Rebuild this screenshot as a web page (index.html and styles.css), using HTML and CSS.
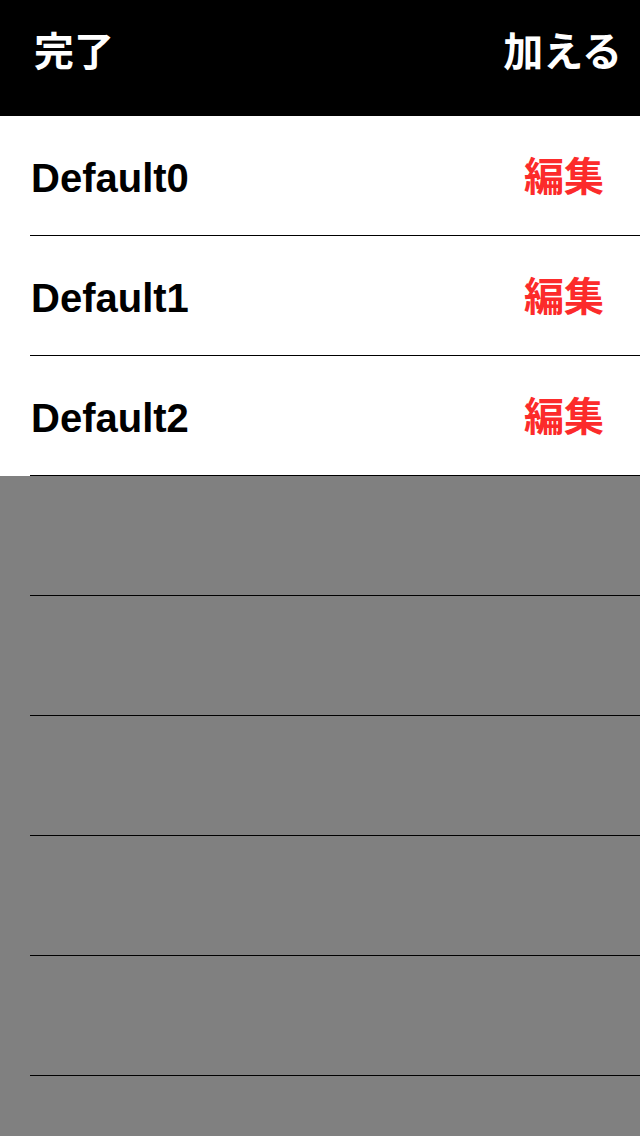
FILE: index.html
```html
<!DOCTYPE html>
<html lang="ja">
<head>
<meta charset="utf-8">
<link rel="stylesheet" href="styles.css">
</head>
<body>
<div class="screen">
  <header class="navbar">
    <span class="nav-btn">完了</span>
    <span class="nav-btn">加える</span>
  </header>
  <ul class="list">
    <li class="row"><span class="title">Default0</span><span class="edit">編集</span></li>
    <li class="row"><span class="title">Default1</span><span class="edit">編集</span></li>
    <li class="row"><span class="title">Default2</span><span class="edit">編集</span></li>
    <li class="row empty"></li>
    <li class="row empty"></li>
    <li class="row empty"></li>
    <li class="row empty"></li>
    <li class="row empty"></li>
    <li class="row empty"></li>
  </ul>
</div>
</body>
</html>
```
FILE: styles.css
```css
html, body {
  margin: 0;
  padding: 0;
  background: #808080;
}
.screen {
  width: 640px;
  height: 1136px;
  overflow: hidden;
  display: flex;
  flex-direction: column;
  background: #808080;
}
.navbar {
  height: 116px;
  flex: 0 0 116px;
  background: #000;
  display: flex;
  justify-content: space-between;
  align-items: flex-start;
  padding: 26px 18px 0 34px;
  box-sizing: border-box;
}
.nav-btn {
  color: #fff;
  font-family: "Noto Sans CJK JP", sans-serif;
  font-weight: 700;
  font-size: 40px;
  line-height: 46px;
}
.list {
  list-style: none;
  margin: 0;
  padding: 0;
  display: flex;
  flex-direction: column;
}
.row {
  height: 120px;
  flex: 0 0 120px;
  box-sizing: border-box;
  display: flex;
  align-items: center;
  justify-content: space-between;
  padding: 0 36px 0 31px;
  background: #fff;
  position: relative;
}
.row::after {
  content: "";
  position: absolute;
  left: 30px;
  right: 0;
  bottom: 0;
  height: 1px;
  background: #000;
}
.row.empty {
  background: #808080;
}
.title {
  font-family: "Liberation Sans", Arial, sans-serif;
  font-weight: 700;
  font-size: 40px;
  color: #000;
  margin-top: 4px;
}
.edit {
  font-family: "Noto Sans CJK JP", sans-serif;
  font-weight: 700;
  font-size: 40px;
  color: #fc2b2b;
  margin-top: -4px;
}
```
